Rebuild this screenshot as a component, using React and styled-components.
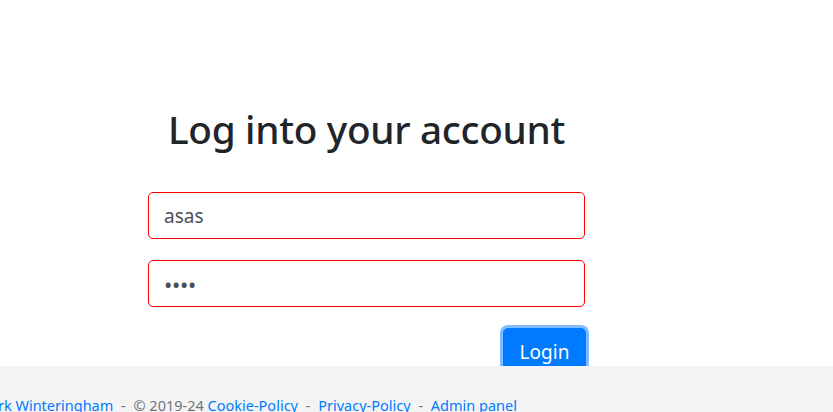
import React from "react";
import styled, { createGlobalStyle } from "styled-components";

const GlobalStyle = createGlobalStyle`
  html, body {
    margin: 0;
    padding: 0;
    background: #fff;
    font-family: "Noto Sans", "Open Sans", "Liberation Sans", sans-serif;
    color: #212529;
    overflow: hidden;
  }
`;

const Page = styled.div`
  min-height: 412px;
  display: flex;
  flex-direction: column;
`;

const LoginColumn = styled.main`
  width: 437px;
  margin-left: 148px;
  padding-top: 105px;
  display: flex;
  flex-direction: column;
`;

const Title = styled.h1`
  margin: 0 0 39px;
  font-size: 38.7px;
  font-weight: 500;
  line-height: 48px;
  text-align: center;
  letter-spacing: -0.3px;
`;

const Form = styled.form`
  display: flex;
  flex-direction: column;
  gap: 21px;
`;

const Input = styled.input`
  box-sizing: border-box;
  width: 100%;
  height: 47px;
  padding: 8px 15px;
  font-family: inherit;
  font-size: 19px;
  color: #495057;
  background: #fff;
  border: 1px solid ${(p) => (p.$invalid ? "#ff0000" : "#ced4da")};
  border-radius: 5px;
  outline: none;

  &[type="password"] {
    font-size: 22px;
    letter-spacing: -0.3px;
  }
`;

const Actions = styled.div`
  display: flex;
  justify-content: flex-end;
`;

const Button = styled.button`
  box-sizing: border-box;
  height: 48px;
  width: 83px;
  margin-right: -1px;
  font-family: inherit;
  font-size: 19px;
  color: #fff;
  background: #007bff;
  border: 1px solid #007bff;
  border-radius: 5px;
  box-shadow: 0 0 0 3px #80bdff;
  cursor: pointer;
`;

const Footer = styled.footer`
  position: fixed;
  left: 0;
  right: 0;
  bottom: 0;
  height: 46px;
  background: #f4f4f4;
  display: flex;
  padding-top: 29px;
  box-sizing: border-box;
  overflow: hidden;
`;

const FooterText = styled.p`
  margin: 0;
  width: 517px;
  flex-shrink: 0;
  display: flex;
  justify-content: flex-end;
  white-space: nowrap;
  font-size: 14.5px;
  line-height: 20px;
  color: #6c757d;
`;

const Line = styled.span`
  flex-shrink: 0;
`;

const Sep = styled.span`
  padding: 0 4px;
`;

const FooterLink = styled.a`
  color: #007bff;
  text-decoration: none;
`;

export default function App() {
  return (
    <Page>
      <GlobalStyle />
      <LoginColumn>
        <Title>Log into your account</Title>
        <Form onSubmit={(e) => e.preventDefault()}>
          <Input $invalid type="text" defaultValue="asas" aria-label="Username" />
          <Input $invalid type="password" defaultValue="asas" aria-label="Password" />
          <Actions>
            <Button type="submit">Login</Button>
          </Actions>
        </Form>
      </LoginColumn>
      <Footer>
        <FooterText>
          <Line>
            Created by <FooterLink href="#">Mark Winteringham</FooterLink>
            <Sep> - </Sep>© 2019-24 <FooterLink href="#">Cookie-Policy</FooterLink>
            <Sep> - </Sep>
            <FooterLink href="#">Privacy-Policy</FooterLink>
            <Sep> - </Sep>
            <FooterLink href="#">Admin panel</FooterLink>
          </Line>
        </FooterText>
      </Footer>
    </Page>
  );
}
